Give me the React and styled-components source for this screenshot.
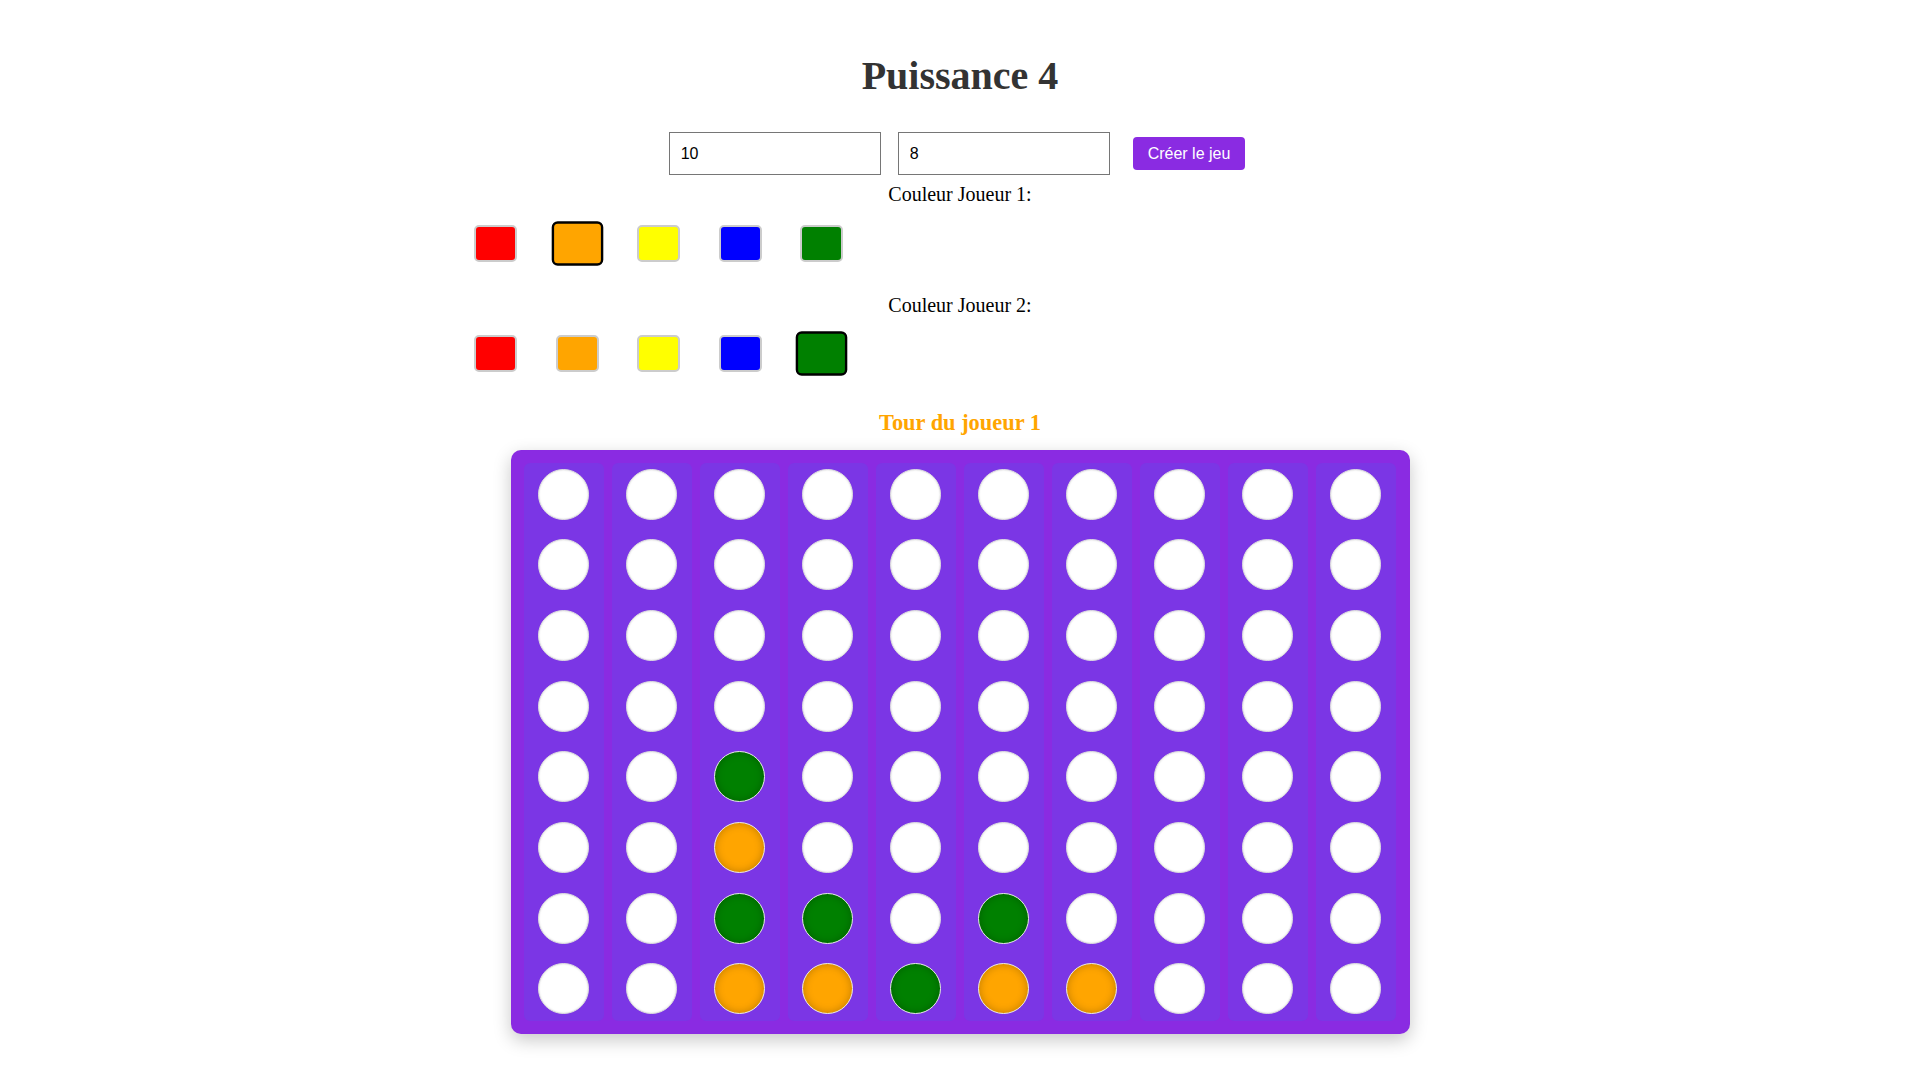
import React, { useState } from 'react';
import styled, { createGlobalStyle } from 'styled-components';

const COLORS = ['red', 'orange', 'yellow', 'blue', 'green'];

// board stored column by column, top to bottom (8 rows)
const INITIAL_BOARD = [
  [null, null, null, null, null, null, null, null],
  [null, null, null, null, null, null, null, null],
  [null, null, null, null, 2, 1, 2, 1],
  [null, null, null, null, null, null, 2, 1],
  [null, null, null, null, null, null, null, 2],
  [null, null, null, null, null, null, 2, 1],
  [null, null, null, null, null, null, null, 1],
  [null, null, null, null, null, null, null, null],
  [null, null, null, null, null, null, null, null],
  [null, null, null, null, null, null, null, null]
];

const GlobalStyle = createGlobalStyle`
  body {
    margin: 0;
    background: #fff;
    font-family: "Liberation Serif", "Times New Roman", serif;
  }
`;

const App = () => {
  const [cols, setCols] = useState('10');
  const [rows, setRows] = useState('8');
  const [color1, setColor1] = useState('orange');
  const [color2, setColor2] = useState('green');
  const [board] = useState(INITIAL_BOARD);
  const currentPlayer = 1;

  const colorOf = (cell) => {
    if (cell === 1) return color1;
    if (cell === 2) return color2;
    return null;
  };

  return (
    <Page>
      <GlobalStyle />
      <Title>Puissance 4</Title>

      <Controls>
        <SizeInput type="number" value={cols} onChange={(e) => setCols(e.target.value)} />
        <SizeInput type="number" value={rows} onChange={(e) => setRows(e.target.value)} />
        <CreateButton>Créer le jeu</CreateButton>
      </Controls>

      <Picker>
        <PickerLabel>Couleur Joueur 1:</PickerLabel>
        <Palette>
          {COLORS.map((c) => (
            <Swatch key={c} $color={c} $selected={c === color1} onClick={() => setColor1(c)} />
          ))}
        </Palette>
      </Picker>

      <Picker $second>
        <PickerLabel>Couleur Joueur 2:</PickerLabel>
        <Palette>
          {COLORS.map((c) => (
            <Swatch key={c} $color={c} $selected={c === color2} onClick={() => setColor2(c)} />
          ))}
        </Palette>
      </Picker>

      <Turn $color={currentPlayer === 1 ? color1 : color2}>Tour du joueur {currentPlayer}</Turn>

      <Board>
        {board.map((column, ci) => (
          <Column key={ci}>
            {column.map((cell, ri) => (
              <Cell key={ri} $color={colorOf(cell)} />
            ))}
          </Column>
        ))}
      </Board>
    </Page>
  );
};

export default App;

const Page = styled.div`
  display: flex;
  flex-direction: column;
  align-items: center;
  padding-bottom: 40px;
`;

const Title = styled.h1`
  margin: 53px 0 0;
  font-size: 40px;
  line-height: 46px;
  font-weight: bold;
  color: #333;
`;

const Controls = styled.div`
  display: flex;
  align-items: center;
  margin-top: 33px;
  margin-left: -6px;
`;

const SizeInput = styled.input`
  box-sizing: border-box;
  width: 212px;
  height: 43px;
  padding: 0 11px;
  margin-right: 17px;
  border: 1px solid #767676;
  border-radius: 0;
  font-family: "Liberation Sans", Arial, sans-serif;
  font-size: 16px;
  color: #000;
  appearance: textfield;

  &::-webkit-inner-spin-button,
  &::-webkit-outer-spin-button {
    -webkit-appearance: none;
    margin: 0;
  }

  & + & {
    margin-right: 23px;
  }
`;

const CreateButton = styled.button`
  box-sizing: border-box;
  height: 33px;
  padding: 0 15px;
  border: none;
  border-radius: 4px;
  background-color: #8a2be2;
  color: #fff;
  font-family: "Liberation Sans", Arial, sans-serif;
  font-size: 16px;
  cursor: pointer;
`;

const Picker = styled.div`
  width: 972px;
  margin-top: ${(p) => (p.$second ? '32px' : '8px')};
`;

const PickerLabel = styled.div`
  text-align: center;
  font-size: 20px;
  line-height: 22px;
  color: #000;
`;

const Palette = styled.div`
  display: flex;
  gap: 38.5px;
  margin-top: 19.5px;
`;

const Swatch = styled.div`
  box-sizing: border-box;
  width: 43px;
  height: 37px;
  border-radius: 5px;
  background-color: ${(p) => p.$color};
  border: 2px solid ${(p) => (p.$selected ? '#000' : '#ccc')};
  transform: ${(p) => (p.$selected ? 'scale(1.2)' : 'none')};
  cursor: pointer;
`;

const Turn = styled.h2`
  margin: 37.5px 0 0;
  font-size: 22.4px;
  line-height: 26px;
  font-weight: bold;
  color: ${(p) => p.$color};
`;

const Board = styled.div`
  box-sizing: border-box;
  display: flex;
  gap: 8px;
  width: 899px;
  height: 584px;
  margin-top: 14px;
  padding: 13px;
  border-radius: 10px;
  background-color: #8a2be2;
  box-shadow: 0 6px 18px rgba(0, 0, 0, 0.22);
`;

const Column = styled.div`
  display: flex;
  flex-direction: column;
  align-items: center;
  justify-content: space-between;
  width: 80px;
  padding: 6px 0;
  box-sizing: border-box;
  border-radius: 6px;
  background-color: #7b36e5;
`;

const Cell = styled.div`
  box-sizing: border-box;
  width: 51px;
  height: 51px;
  border-radius: 50%;
  background-color: ${(p) => p.$color || '#fff'};
  border: 1px solid ${(p) => (p.$color ? '#e8e8e8' : '#ddd')};
  box-shadow: ${(p) =>
    p.$color ? 'inset 0 0 8px rgba(0, 0, 0, 0.25)' : 'inset 0 0 2px rgba(0, 0, 0, 0.15)'};
`;
